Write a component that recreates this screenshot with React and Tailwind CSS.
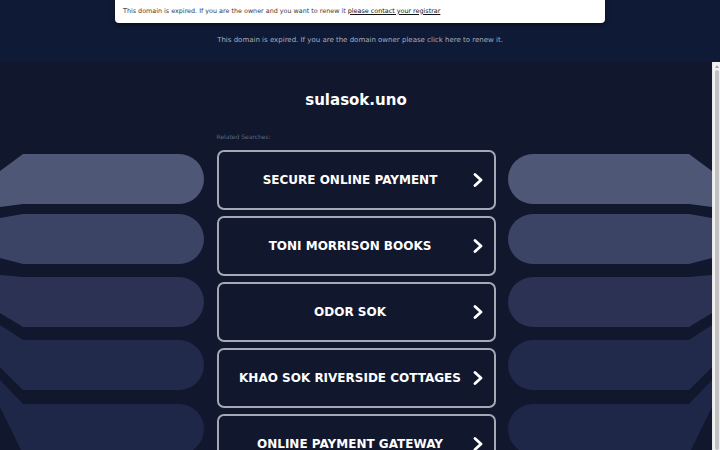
import React from "react";

const pills = [
  { t: 92, lt: 109, lb: 145, c: "#4f5776" },
  { t: 152, lt: 156, lb: 196, c: "#3c4465" },
  { t: 215, lt: 213, lb: 251, c: "#2b3253" },
  { t: 278, lt: 263, lb: 305, c: "#222a4b" },
  { t: 342, lt: 318, lb: 345, c: "#1e2748" },
];

function Decor({ mirror }) {
  return (
    <svg
      width="210"
      height="400"
      viewBox="0 0 210 400"
      className={mirror ? "absolute right-0 top-0 -scale-x-100" : "absolute left-0 top-0"}
    >
      {pills.map((p, i) => {
        const b = p.t + 50;
        const d = `M 0 ${p.lt} L 23 ${p.t} L 179 ${p.t} A 25 25 0 0 1 179 ${b} L 23 ${b} L 0 ${p.lb} Z`;
        return <path key={i} d={d} fill={p.c} />;
      })}
    </svg>
  );
}

const items = [
  "SECURE ONLINE PAYMENT",
  "TONI MORRISON BOOKS",
  "ODOR SOK",
  "KHAO SOK RIVERSIDE COTTAGES",
  "ONLINE PAYMENT GATEWAY",
];

export default function App() {
  return (
    <div
      className="h-screen w-full overflow-hidden bg-[#10192f] flex flex-col"
      style={{ fontFamily: '"DejaVu Sans", sans-serif' }}
    >
      <header className="h-[62px] shrink-0 bg-[#0f1b36] flex flex-col items-center">
        <div className="w-[490px] h-[23px] bg-white rounded-b-[4px] shadow-[0_2px_4px_rgba(0,0,0,0.5)] flex items-center px-[8px] text-[6.4px] text-[#3a3a3a]">
          <span>
            This domain is expired. If you are the owner and you want to renew it{" "}
            <span className="underline text-[#111]">please contact your registrar</span>
          </span>
        </div>
        <div className="mt-[12px] text-[7px] leading-[10px] text-[#a7adbd]">
          This domain is expired. If you are the domain owner please click here to renew it.
        </div>
      </header>
      <main className="flex-1 min-h-0 flex bg-[#11182d]">
        <div className="relative flex-1 overflow-hidden flex flex-col items-center pt-[29px]">
          <Decor />
          <Decor mirror />
          <h1 className="relative text-[15px] leading-[18px] font-bold text-white">sulasok.uno</h1>
          <div className="relative w-[279px] mt-[24px]">
            <div className="text-[6px] leading-[8px] text-[#5f6680]">Related Searches:</div>
            <div className="mt-[9px] flex flex-col gap-[6px]">
              {items.map((t) => (
                <div
                  key={t}
                  className="relative h-[60px] shrink-0 border-2 border-[#a5a9b5] rounded-[7px] bg-[#11172c] flex items-center justify-center pr-[12px]"
                >
                  <span className="text-[12px] font-bold text-white">{t}</span>
                  <svg
                    width="10"
                    height="14"
                    viewBox="0 0 10 14"
                    className="absolute right-[11px] top-1/2 -translate-y-1/2"
                  >
                    <polyline
                      points="2,1.5 8,7 2,12.5"
                      fill="none"
                      stroke="white"
                      strokeWidth="2.8"
                      strokeLinecap="round"
                      strokeLinejoin="round"
                    />
                  </svg>
                </div>
              ))}
            </div>
          </div>
        </div>
        <div className="w-[8px] shrink-0 bg-[#f1f1f1] flex flex-col border-l border-[#e6e6e6]">
          <div className="h-[8px] flex items-center justify-center">
            <svg width="4" height="3" viewBox="0 0 4 3">
              <polygon points="2,0 4,3 0,3" fill="#a3a3a3" />
            </svg>
          </div>
          <div className="flex-1 mx-[1.5px] bg-[#c1c1c1] rounded-[2px]" />
        </div>
      </main>
    </div>
  );
}
